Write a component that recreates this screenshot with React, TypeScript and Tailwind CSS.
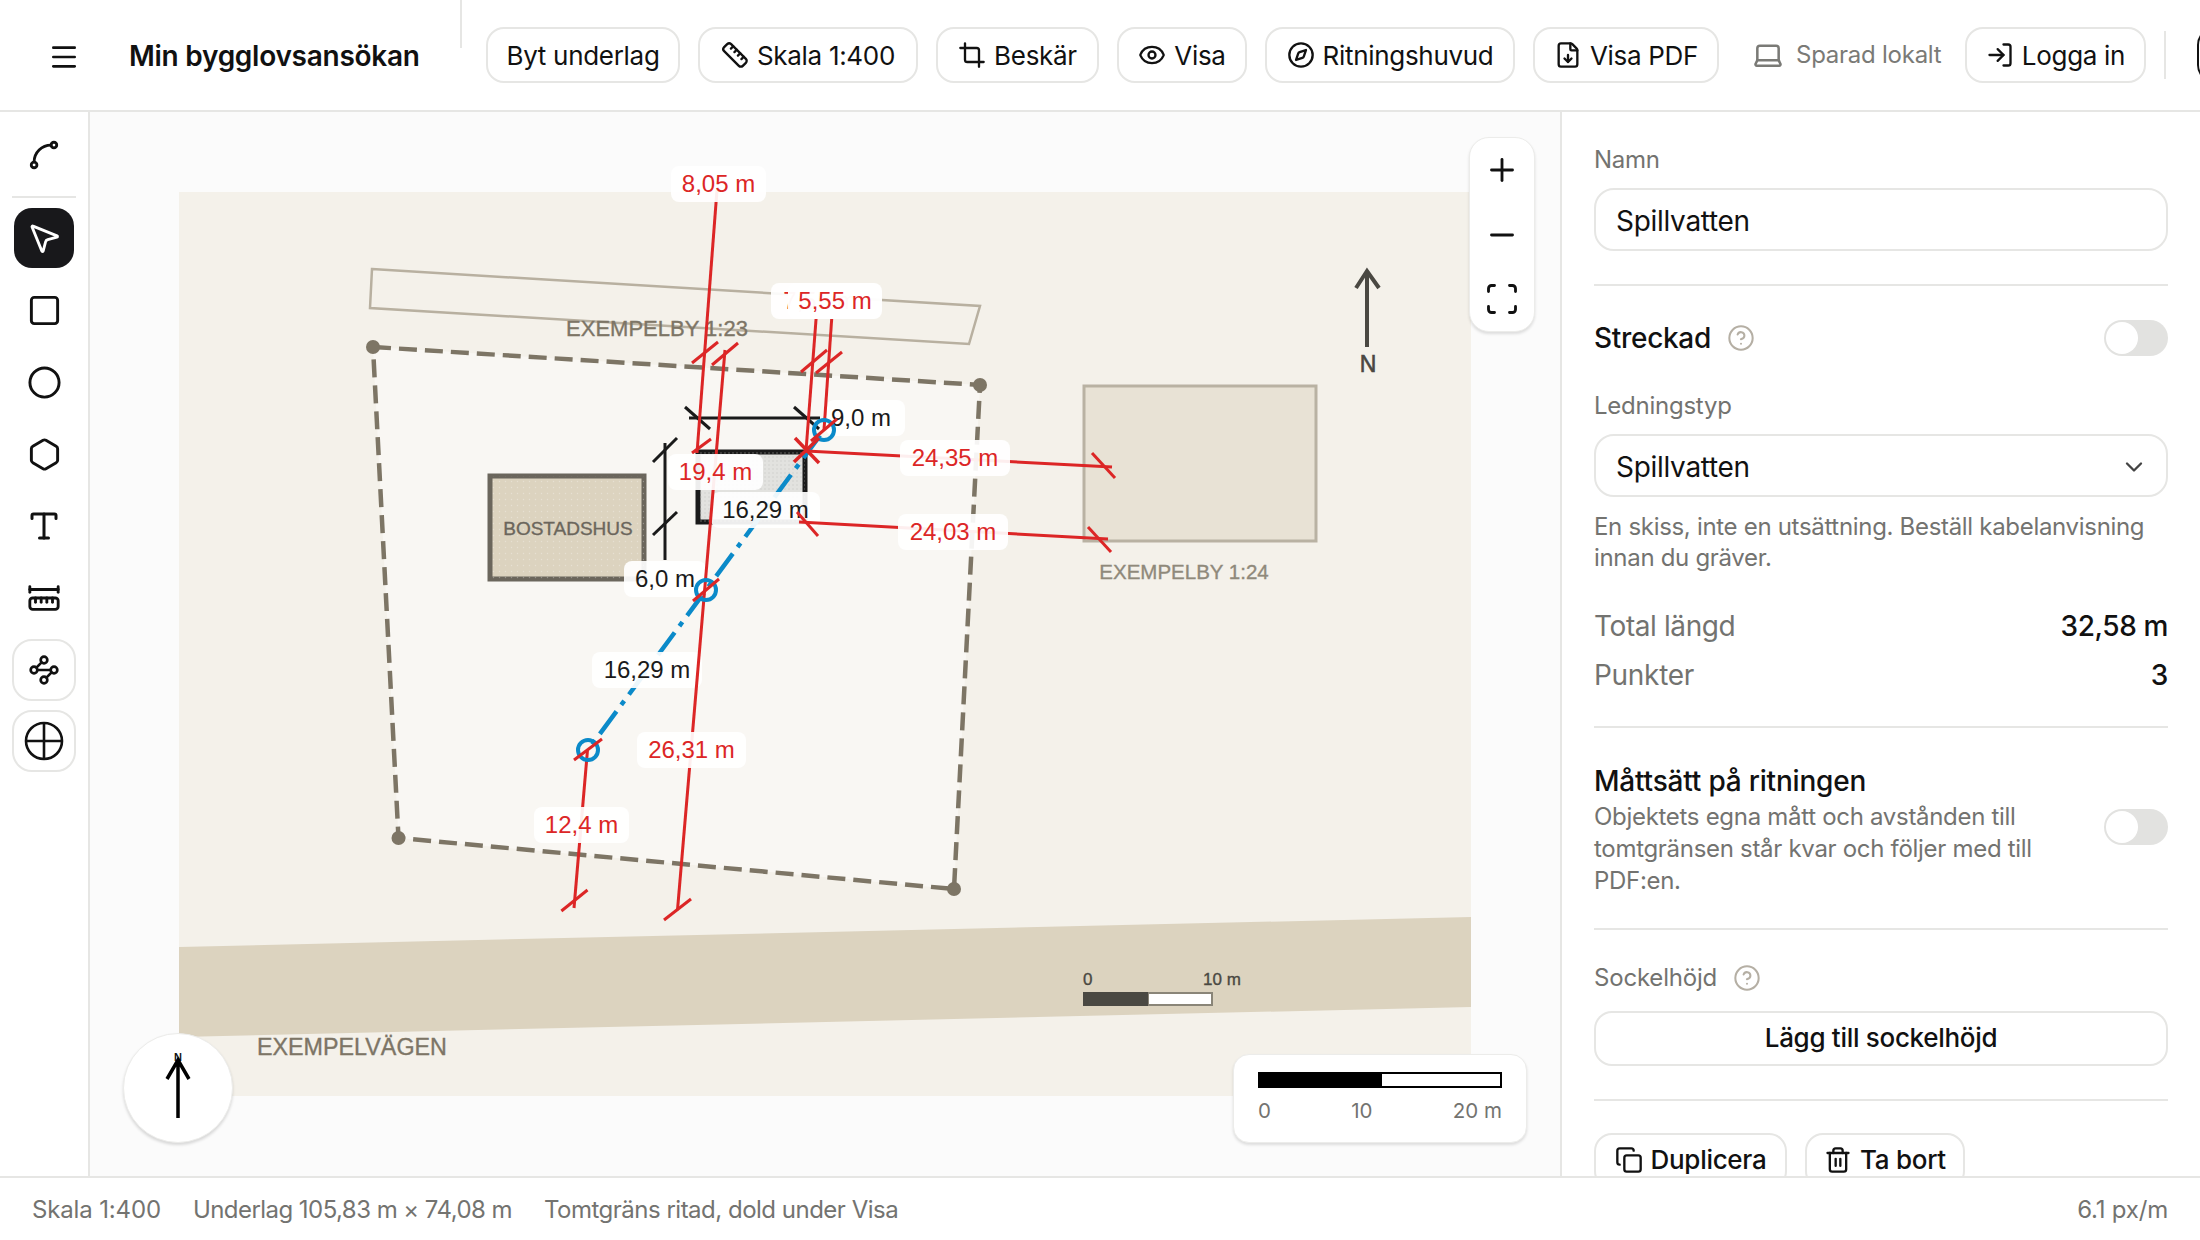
import React from "react";
import {
  Menu, Ruler, Crop, Eye, Compass, FileDown, Laptop, LogIn, Spline, MousePointer2, Square, Circle, Hexagon, Type,
  RulerDimensionLine, Waypoints, Plus, Minus, Scan, CircleHelp, ChevronDown, Copy, Trash2,
} from "lucide-react";

const HBtn = ({ icon, children, w }: { icon?: React.ReactNode; children: React.ReactNode; w: string }) => (
  <button className={`flex h-[56px] shrink-0 items-center justify-center gap-[8px] rounded-[18px] border-2 border-[#e6e6e4] bg-white text-[26px] tracking-[-0.3px] text-[#111] ${w}`}>
    {icon}
    <span>{children}</span>
  </button>
);

const Toggle = () => (
  <div className="flex h-[36px] w-[64px] shrink-0 items-center rounded-full bg-[#e2e2e0] pl-[2px]">
    <div className="h-[32px] w-[32px] rounded-full bg-white" />
  </div>
);

const Divider = ({ mt }: { mt: string }) => <div className={`h-[2px] w-full bg-[#e6e6e4] ${mt}`} />;

const Tool = ({ children, kind }: { children: React.ReactNode; kind?: string }) => (
  <div className={kind === "active" ? "flex h-[60px] w-[60px] items-center justify-center rounded-[18px] bg-[#18181b] text-white" : kind === "box" ? "flex h-[62px] w-[64px] items-center justify-center rounded-[20px] border-2 border-[#e6e6e4] bg-white text-[#111]" : "flex h-[60px] w-[60px] items-center justify-center text-[#111]"}>
    {children}
  </div>
);

const Lbl = ({ x, y, w, h = 36, cx, text, color, o = 0.92 }: { x: number; y: number; w: number; h?: number; cx?: number; text: string; color: string; o?: number }) => (
  <g>
    <rect x={x} y={y} width={w} height={h} rx={8} fill="#fff" fillOpacity={o} />
    <text x={cx ?? x + w / 2} y={y + h / 2 + 7.5} textAnchor="middle" fontSize={24} fill={color} fontFamily="'Liberation Sans',sans-serif">{text}</text>
  </g>
);

const R = "#dc2626";
const B = "#1a1a1a";
const Seg = ({ p, c = R, w = 3 }: { p: number[]; c?: string; w?: number }) => (
  <line x1={p[0]} y1={p[1]} x2={p[2]} y2={p[3]} stroke={c} strokeWidth={w} />
);

const MapText = ({ x, y, size, fill, anchor, sw = 0.35, children }: { x: number; y: number; size: number; fill: string; anchor?: "middle"; sw?: number; children: React.ReactNode }) => (
  <text x={x} y={y} textAnchor={anchor} fontSize={size} fill={fill} stroke={fill} strokeWidth={sw} fontFamily="'Liberation Sans',sans-serif">{children}</text>
);

const Map = () => (
  <svg className="absolute inset-0" width={1470} height={1064} viewBox="90 112 1470 1064">
    <defs>
      <pattern id="dots" width="6" height="6" patternUnits="userSpaceOnUse">
        <circle cx="1.5" cy="1.5" r="0.7" fill="#ffffff" fillOpacity="0.3" />
      </pattern>
      <pattern id="dots2" width="4" height="4" patternUnits="userSpaceOnUse">
        <circle cx="1" cy="1" r="0.7" fill="#bdbdb8" fillOpacity="0.6" />
      </pattern>
    </defs>
    <rect x={179} y={192} width={1292} height={904} fill="#f4f1ea" />
    <polygon points="179,947 1471,917 1471,1007 179,1037" fill="#dcd3bf" />
    <polygon points="372,269 980,306 969,344 370,308" fill="#f4f1ea" stroke="#b8b0a0" strokeWidth={2.5} />
    <polygon points="373,347 980,385 954,889 398.500,838" fill="#f9f7f3" stroke="#7d7565" strokeWidth={4.5} strokeDasharray="18 8" />
    <circle cx={373} cy={347} r={7} fill="#7d7565" />
    <circle cx={980} cy={385} r={7} fill="#7d7565" />
    <circle cx={954} cy={889} r={7} fill="#7d7565" />
    <circle cx={398.5} cy={838} r={7} fill="#7d7565" />
    <MapText x={657} y={336} size={22} fill="#7d7566" anchor="middle">EXEMPELBY 1:23</MapText>
    <rect x={1084} y={386} width={232} height={155} fill="#e8e2d5" stroke="#b9b2a3" strokeWidth={3} />
    <MapText x={1184} y={579} size={20.5} fill="#8f897b" anchor="middle">EXEMPELBY 1:24</MapText>
    <rect x={490} y={476} width={154} height={103} fill="#dcd3bf" stroke="#6b665c" strokeWidth={5} />
    <rect x={490} y={476} width={154} height={103} fill="url(#dots)" />
    <MapText x={568} y={535} size={19} fill="#6b665c" anchor="middle">BOSTADSHUS</MapText>
    <MapText x={257} y={1055} size={23.3} fill="#7d7566">EXEMPELVÄGEN</MapText>
    <path d="M1367 347V271M1356 288L1367 271L1379 288" fill="none" stroke="#4a4842" strokeWidth={4} />
    <MapText x={1368} y={372} size={23} fill="#4a4842" anchor="middle" sw={0.6}>N</MapText>
    <MapText x={1083} y={985} size={17} fill="#4a4842">0</MapText>
    <MapText x={1203} y={985} size={17} fill="#4a4842">10 m</MapText>
    <rect x={1148} y={993} width={64} height={12} fill="#fff" stroke="#8a8578" strokeWidth={2} />
    <rect x={1083} y={992} width={65} height={14} fill="#4a4842" />

    <rect x={698} y={452} width={107} height={70} fill="#e2e2df" stroke={B} strokeWidth={5} />
    <rect x={698} y={452} width={107} height={70} fill="url(#dots2)" />
    <Seg p={[689, 418, 820, 418]} c={B} />
    <Seg p={[685, 407, 710, 429]} c={B} />
    <Seg p={[794, 407, 819, 429]} c={B} />
    <Seg p={[665, 443, 665, 560]} c={B} />
    <Seg p={[653, 462, 677, 438]} c={B} />
    <Seg p={[653, 535, 677, 512]} c={B} />
    <line x1={588} y1={750} x2={824} y2={430} stroke="#0b8ac9" strokeWidth={4.5} strokeDasharray="28 8 5 8" strokeDashoffset={29} />
    <Lbl x={592} y={652} w={110} text="16,29 m" color="#1a1a1a" />
    <Lbl x={711} y={492} w={109} text="16,29 m" color="#1a1a1a" />
    <Lbl x={624} y={561} w={82} text="6,0 m" color="#1a1a1a" />
    <Lbl x={826} y={400} w={79} cx={861} text="9,0 m" color="#1a1a1a" />

    <Seg p={[717, 190, 697, 453]} />
    <Seg p={[725, 350, 677.5, 910]} />
    <Seg p={[587.5, 750, 574, 908]} />
    <Seg p={[833, 300, 824, 430]} />
    <Seg p={[817.5, 300, 806, 451]} />
    <Seg p={[692, 363, 718, 342]} />
    <Seg p={[712, 365, 738, 343]} />
    <Seg p={[801, 372, 827, 350]} />
    <Seg p={[816, 373, 842, 352]} />
    <Seg p={[692, 453, 711, 439]} />
    <Seg p={[664, 920, 691, 899]} />
    <Seg p={[561.4, 911, 587.5, 890]} />
    <Seg p={[806, 451, 1112, 467]} />
    <Seg p={[799, 522, 1108, 539]} />
    <Seg p={[1092, 453, 1115, 478]} />
    <Seg p={[1088, 527, 1111, 552]} />
    <Lbl x={671} y={166} w={95} text="8,05 m" color={R} />
    <Lbl x={771} y={283} w={90} cx={820} text="7,55 m" color={R} />
    <Lbl x={788} y={283} w={94} text="5,55 m" color={R} o={0.97} />
    <Lbl x={668} y={454} w={95} text="19,4 m" color={R} />
    <Lbl x={637} y={732} w={109} text="26,31 m" color={R} />
    <Lbl x={534} y={807} w={95} text="12,4 m" color={R} />
    <Lbl x={900} y={440} w={110} text="24,35 m" color={R} />
    <Lbl x={898} y={514} w={110} text="24,03 m" color={R} />
    <circle cx={588} cy={750} r={10} fill="none" stroke="#0b8ac9" strokeWidth={4} />
    <circle cx={706} cy={590} r={10} fill="none" stroke="#0b8ac9" strokeWidth={4} />
    <circle cx={824} cy={430} r={10} fill="none" stroke="#0b8ac9" strokeWidth={4} />
    <Seg p={[574, 760, 602, 739]} />
    <Seg p={[693, 601, 719, 579]} />
    <Seg p={[811, 441, 837, 419]} />
    <Seg p={[794, 462, 819, 438]} w={3.5} />
    <Seg p={[795, 438, 819, 463]} w={3.5} />
    <Seg p={[797, 512, 818, 536]} />
  </svg>
);

export default function App() {
  return (
    <div className="flex h-[1240px] w-[2200px] flex-col overflow-hidden bg-white font-['Inter',sans-serif] text-[#111]">
      <header className="flex h-[112px] shrink-0 items-center gap-[18px] overflow-hidden border-b-2 border-[#e6e6e4] pl-[48px]">
        <Menu size={32} strokeWidth={2} className="mt-[3px] shrink-0" />
        <div className="ml-[31px] w-[313px] shrink-0 whitespace-nowrap pt-[2px] text-[28px] font-semibold tracking-[-0.27px]">Min bygglovsansökan</div>
        <div className="h-[48px] w-[2px] shrink-0 self-start bg-[#e6e6e4]" />
        <div className="ml-[6px] flex items-center gap-[18px]">
          <HBtn w="w-[194px]">Byt underlag</HBtn>
          <HBtn w="w-[220px]" icon={<Ruler size={28} strokeWidth={2} />}>Skala 1:400</HBtn>
          <HBtn w="w-[163px]" icon={<Crop size={28} strokeWidth={2} />}>Beskär</HBtn>
          <HBtn w="w-[130px]" icon={<Eye size={28} strokeWidth={2} />}>Visa</HBtn>
          <HBtn w="w-[250px]" icon={<Compass size={28} strokeWidth={2} />}>Ritningshuvud</HBtn>
          <HBtn w="w-[186px]" icon={<FileDown size={28} strokeWidth={2} />}>Visa PDF</HBtn>
          <div className="flex w-[210px] shrink-0 items-center gap-[12px] pl-[15px] text-[24px] tracking-[-0.25px] text-[#7a7a76]">
            <Laptop size={32} strokeWidth={1.9} className="shrink-0" />
            <span className="whitespace-nowrap">Sparad lokalt</span>
          </div>
          <HBtn w="w-[181px]" icon={<LogIn size={28} strokeWidth={2} />}>Logga in</HBtn>
          <div className="h-[48px] w-[2px] shrink-0 bg-[#e6e6e4]" />
          <div className="h-[56px] w-[60px] shrink-0 translate-x-[13px] rounded-[18px] border-2 border-[#111] bg-white" />
        </div>
      </header>
      <div className="flex min-h-0 flex-1">
        <aside className="flex w-[90px] shrink-0 flex-col items-center border-r-2 border-[#e6e6e4] pt-[13px]">
          <Tool><Spline size={34} strokeWidth={2} /></Tool>
          <div className="mb-[10px] mt-[11px] h-[2px] w-[64px] bg-[#e6e6e4]" />
          <Tool kind="active"><MousePointer2 size={36} strokeWidth={1.9} /></Tool>
          <div className="mt-[12px]"><Tool><Square size={35} strokeWidth={2} /></Tool></div>
          <div className="mt-[12px]"><Tool><Circle size={35} strokeWidth={2} /></Tool></div>
          <div className="mt-[12px]"><Tool><Hexagon size={35} strokeWidth={2} /></Tool></div>
          <div className="mt-[12px]"><Tool><Type size={36} strokeWidth={2} /></Tool></div>
          <div className="mt-[12px]"><Tool><RulerDimensionLine size={34} strokeWidth={2} /></Tool></div>
          <div className="mt-[11px]"><Tool kind="box"><Waypoints size={32} strokeWidth={2} /></Tool></div>
          <div className="mt-[9px]">
            <Tool kind="box">
              <svg width="42" height="42" viewBox="0 0 42 42" fill="none" stroke="currentColor" strokeWidth="2.6">
                <circle cx="21" cy="21" r="18" />
                <path d="M21 3V39M3 21H39" />
              </svg>
            </Tool>
          </div>
        </aside>
        <main className="relative min-w-0 flex-1 overflow-hidden bg-[#fbfbfb]">
          <Map />
          <div className="absolute left-[1379px] top-[25px] flex h-[195px] w-[66px] flex-col items-center justify-between rounded-[20px] border border-[#ececea] bg-white py-[14px] text-[#111] shadow-[0_2px_3px_rgba(0,0,0,0.12)]">
            <Plus size={36} strokeWidth={1.9} />
            <Minus size={36} strokeWidth={1.9} />
            <Scan size={36} strokeWidth={1.9} />
          </div>
          <div className="absolute left-[1143px] top-[942px] h-[89px] w-[294px] rounded-[16px] border border-[#ececea] bg-white pl-[24px] pt-[17px] shadow-[0_2px_3px_rgba(0,0,0,0.12)]">
            <div className="flex h-[16px] w-[244px] border-2 border-black">
              <div className="h-full w-[122px] bg-black" />
            </div>
            <div className="mt-[9px] flex w-[244px] justify-between text-[20.500px] leading-[28px] text-[#737370]">
              <span>0</span><span>10</span><span>20 m</span>
            </div>
          </div>
          <div className="absolute left-[33px] top-[921px] flex h-[110px] w-[110px] items-center justify-center rounded-full border border-[#ececea] bg-white shadow-[0_2px_3px_rgba(0,0,0,0.14)]">
            <svg width="60" height="90" viewBox="0 0 60 90">
              <text x="30" y="18" textAnchor="middle" fontSize="11" fontWeight="700" fill="#111" fontFamily="'Liberation Sans',sans-serif">N</text>
              <path d="M30 75V19M19 36L30 17L41 36" fill="none" stroke="#000" strokeWidth="3.5" />
            </svg>
          </div>
        </main>
        <aside className="w-[640px] shrink-0 overflow-hidden border-l-2 border-[#e6e6e4] bg-white px-[32px] pt-[32px]">
          <div className="text-[24px] leading-[32px] tracking-[-0.25px] text-[#737370]">Namn</div>
          <div className="mt-[12px] flex h-[63px] items-center rounded-[20px] border-2 border-[#e6e6e4] px-[20px] pt-[2px] text-[28px] tracking-[-0.3px]">Spillvatten</div>
          <Divider mt="mt-[33px]" />
          <div className="mt-[34px] flex h-[36px] items-center justify-between">
            <div className="flex items-center gap-[16px] text-[28px] font-medium tracking-[-0.3px]">
              Streckad
              <CircleHelp size={28} strokeWidth={1.75} className="text-[#b5afa4]" />
            </div>
            <Toggle />
          </div>
          <div className="mt-[34px] text-[24px] leading-[32px] tracking-[-0.25px] text-[#737370]">Ledningstyp</div>
          <div className="mt-[12px] flex h-[63px] items-center justify-between rounded-[20px] border-2 border-[#e6e6e4] pl-[20px] pr-[18px] pt-[2px] text-[28px] tracking-[-0.3px]">
            Spillvatten
            <ChevronDown size={28} strokeWidth={2} className="text-[#444]" />
          </div>
          <div className="mt-[14px] text-[24px] leading-[31px] tracking-[-0.31px] text-[#737370]">En skiss, inte en utsättning. Beställ kabelanvisning<br />innan du gräver.</div>
          <div className="mt-[35px] flex h-[36px] items-center justify-between text-[28px] tracking-[-0.4px]">
            <span className="text-[#737370]">Total längd</span><span className="font-medium">32,58 m</span>
          </div>
          <div className="mt-[13px] flex h-[36px] items-center justify-between text-[28px] tracking-[-0.3px]">
            <span className="text-[#737370]">Punkter</span><span className="font-medium">3</span>
          </div>
          <Divider mt="mt-[33px]" />
          <div className="mt-[37px] text-[28px] font-medium leading-[32px] tracking-[-0.2px]">Måttsätt på ritningen</div>
          <div className="mt-[4px] flex items-center justify-between">
            <div className="text-[24px] leading-[32px] tracking-[-0.3px] text-[#737370]">Objektets egna mått och avstånden till<br />tomtgränsen står kvar och följer med till<br />PDF:en.</div>
            <div className="-mt-[44px]"><Toggle /></div>
          </div>
          <Divider mt="mt-[31px]" />
          <div className="mt-[32px] flex items-center gap-[16px] text-[24px] leading-[32px] tracking-[-0.2px] text-[#737370]">
            Sockelhöjd
            <CircleHelp size={28} strokeWidth={1.75} className="text-[#b5afa4]" />
          </div>
          <div className="mt-[17px] flex h-[55px] items-center justify-center rounded-[18px] border-2 border-[#e6e6e4] pb-[2px] text-[26px] font-medium tracking-[-0.3px]">Lägg till sockelhöjd</div>
          <Divider mt="mt-[33px]" />
          <div className="mt-[32px] flex gap-[18px]">
            <div className="flex h-[56px] w-[193px] items-center justify-center gap-[8px] rounded-[18px] border-2 border-[#e6e6e4] pb-[3px] text-[26px] font-medium tracking-[-0.3px]">
              <Copy size={28} strokeWidth={2} />Duplicera
            </div>
            <div className="flex h-[56px] w-[160px] items-center justify-center gap-[8px] rounded-[18px] border-2 border-[#e6e6e4] pb-[3px] text-[26px] font-medium tracking-[-0.3px]">
              <Trash2 size={28} strokeWidth={2} />Ta bort
            </div>
          </div>
        </aside>
      </div>
      <footer className="flex h-[64px] shrink-0 items-center justify-between border-t-2 border-[#e6e6e4] px-[32px] pt-[2px] text-[24px] text-[#737370]">
        <div className="flex gap-[32px]">
          <span className="tracking-[-0.15px]">Skala 1:400</span>
          <span className="tracking-[-0.55px]">Underlag 105,83 m × 74,08 m</span>
          <span className="tracking-[-0.5px]">Tomtgräns ritad, dold under Visa</span>
        </div>
        <span className="tracking-[-0.2px]">6.1 px/m</span>
      </footer>
    </div>
  );
}
